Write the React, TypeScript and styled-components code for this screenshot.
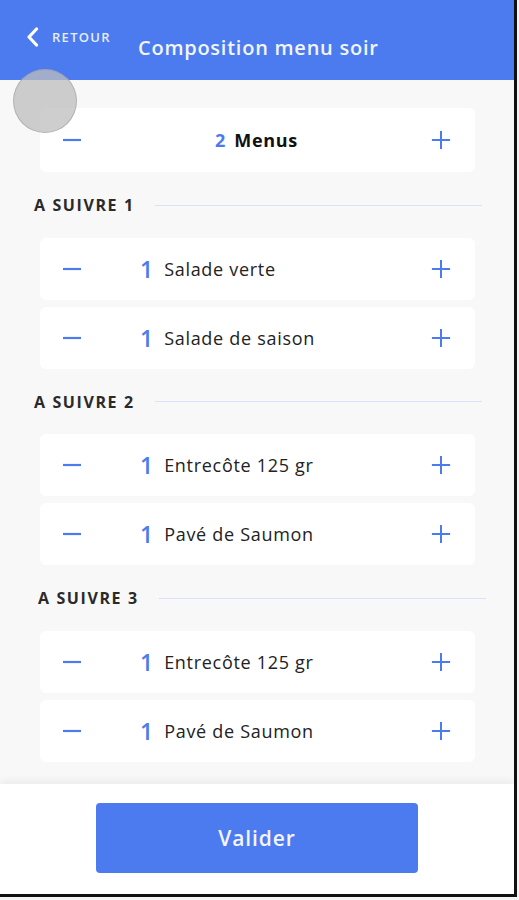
import styled, { createGlobalStyle } from 'styled-components'

const GlobalStyle = createGlobalStyle`
  html, body {
    margin: 0;
    padding: 0;
    background: #f4f4f4;
  }
  body {
    font-family: 'Open Sans', Lato, sans-serif;
    -webkit-font-smoothing: antialiased;
  }
`

const BLUE = '#4b7bee'

const Frame = styled.div`
  position: relative;
  width: 514px;
  height: 894px;
  background: #f8f8f8;
  border-right: 3px solid #111;
  border-bottom: 3px solid #111;
  display: flex;
  flex-direction: column;
  overflow: hidden;
`

const Header = styled.header`
  height: 80px;
  flex-shrink: 0;
  background: ${BLUE};
  display: flex;
  align-items: flex-start;
  color: #fff;
`

const BackButton = styled.div`
  display: flex;
  align-items: center;
  gap: 13px;
  padding: 27px 0 0 26px;
  width: 112px;
  font-size: 13px;
  font-weight: 600;
  letter-spacing: 1.3px;
  color: #e6edfd;
`

const Title = styled.h1`
  margin: 0;
  padding-top: 34px;
  font-size: 20px;
  font-weight: 600;
  letter-spacing: 0.75px;
  color: #f2f5fe;
`

const TouchDot = styled.div`
  position: absolute;
  left: 13px;
  top: 69px;
  width: 64px;
  height: 64px;
  border-radius: 50%;
  background: rgba(190, 190, 190, 0.75);
  border: 1px solid rgba(150, 150, 150, 0.5);
  box-sizing: border-box;
`

const Content = styled.main`
  flex: 1;
  padding-top: 28px;
`

const Card = styled.div<{ $tall?: boolean }>`
  width: 435px;
  height: ${p => (p.$tall ? 64 : 62)}px;
  margin-left: 40px;
  background: #fff;
  border-radius: 6px;
  display: flex;
  align-items: center;
  padding: 0 24px 0 22px;
  box-sizing: border-box;
  & + & {
    margin-top: 7px;
  }
`

const Stepper = styled.button`
  width: 20px;
  height: 20px;
  padding: 0;
  border: none;
  background: none;
  display: flex;
  align-items: center;
  justify-content: center;
`

const Center = styled.div<{ $centered?: boolean }>`
  flex: 1;
  display: flex;
  align-items: center;
  justify-content: ${p => (p.$centered ? 'center' : 'flex-start')};
  padding-left: ${p => (p.$centered ? '0' : '58px')};
`

const Qty = styled.span<{ $big?: boolean }>`
  color: ${BLUE};
  font-size: ${p => (p.$big ? 23 : 18)}px;
  font-weight: ${p => (p.$big ? 600 : 700)};
  margin-right: ${p => (p.$big ? 11 : 9)}px;
`

const Label = styled.span<{ $bold?: boolean }>`
  font-size: 18px;
  font-weight: ${p => (p.$bold ? 700 : 500)};
  letter-spacing: 0.7px;
  color: ${p => (p.$bold ? '#111' : '#222')};
`

const SectionHead = styled.div<{ $indent: number }>`
  display: flex;
  align-items: center;
  gap: 20px;
  padding-left: ${p => p.$indent}px;
  width: 448px;
  margin: 24px 0 23.5px;
  height: 18px;
`

const SectionTitle = styled.span`
  font-size: 16px;
  font-weight: 700;
  letter-spacing: 1.6px;
  color: #2a2a2a;
  white-space: nowrap;
`

const Rule = styled.div`
  flex: 1;
  height: 1px;
  background: #d9e1fb;
`

const Footer = styled.footer`
  height: 110px;
  flex-shrink: 0;
  background: #fff;
  box-shadow: 0 -3px 8px rgba(0, 0, 0, 0.06);
  display: flex;
  justify-content: center;
  padding-top: 19px;
  box-sizing: border-box;
`

const Validate = styled.button`
  width: 322px;
  height: 70px;
  border: none;
  border-radius: 4px;
  background: ${BLUE};
  color: #f2f5fe;
  font-family: 'Open Sans', sans-serif;
  font-size: 21px;
  font-weight: 600;
  letter-spacing: 0.9px;
`

const Minus = () => (
  <svg width="20" height="20" viewBox="0 0 20 20">
    <path d="M1 10h18" stroke={BLUE} strokeWidth="2.2" />
  </svg>
)

const Plus = () => (
  <svg width="22" height="22" viewBox="0 0 22 22">
    <path d="M1 11h20M11 1v20" stroke={BLUE} strokeWidth="2.2" />
  </svg>
)

function ItemRow({ qty, name }: { qty: number; name: string }) {
  return (
    <Card>
      <Stepper><Minus /></Stepper>
      <Center>
        <Qty $big>{qty}</Qty>
        <Label>{name}</Label>
      </Center>
      <Stepper><Plus /></Stepper>
    </Card>
  )
}

const sections = [
  { title: 'A SUIVRE 1', indent: 34, items: ['Salade verte', 'Salade de saison'] },
  { title: 'A SUIVRE 2', indent: 34, items: ['Entrecôte 125 gr', 'Pavé de Saumon'] },
  { title: 'A SUIVRE 3', indent: 38, items: ['Entrecôte 125 gr', 'Pavé de Saumon'] },
]

export default function App() {
  return (
    <>
      <GlobalStyle />
      <Frame>
        <Header>
          <BackButton>
            <svg width="13" height="20" viewBox="0 0 13 20">
              <path d="M10.5 2L3 10l7.5 8" fill="none" stroke="#fff" strokeWidth="3.2" strokeLinecap="round" strokeLinejoin="round" />
            </svg>
            RETOUR
          </BackButton>
          <Title>Composition menu soir</Title>
        </Header>
        <Content>
          <Card $tall>
            <Stepper><Minus /></Stepper>
            <Center $centered>
              <Qty>2</Qty>
              <Label $bold>Menus</Label>
            </Center>
            <Stepper><Plus /></Stepper>
          </Card>
          {sections.map(s => (
            <div key={s.title}>
              <SectionHead $indent={s.indent}>
                <SectionTitle>{s.title}</SectionTitle>
                <Rule />
              </SectionHead>
              {s.items.map(i => (
                <ItemRow key={i} qty={1} name={i} />
              ))}
            </div>
          ))}
        </Content>
        <Footer>
          <Validate>Valider</Validate>
        </Footer>
        <TouchDot />
      </Frame>
    </>
  )
}
